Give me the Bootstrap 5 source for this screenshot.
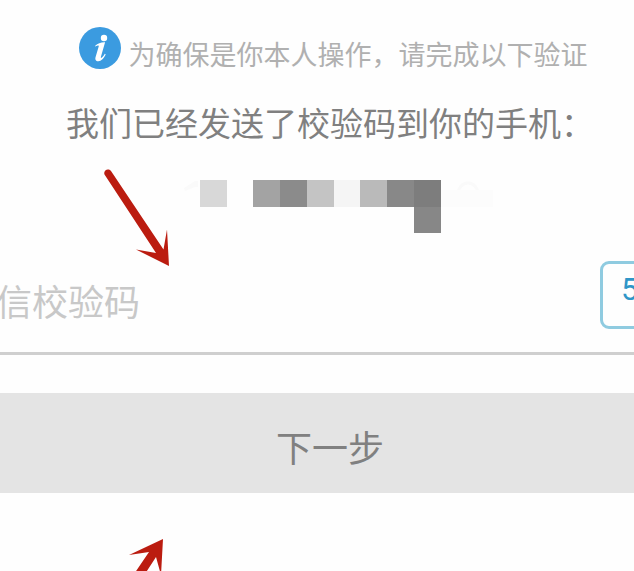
<!DOCTYPE html>
<html lang="zh-CN">
<head>
<meta charset="utf-8">
<meta name="viewport" content="width=device-width, initial-scale=1">
<title>短信验证</title>
<link href="https://cdn.jsdelivr.net/npm/bootstrap@5.3.0/dist/css/bootstrap.min.css" rel="stylesheet">
<style>
body { font-family: Roboto, "Noto Sans CJK SC", sans-serif; background: #fefefe; }
.screen { min-height: 100vh; padding-top: 27px; }
.notice { gap: 8px; padding-left: 32px; font-family: "Noto Sans CJK SC", sans-serif; font-size: 27px; line-height: 54px; color: #b0b0b0; }
.sent { margin-top: 17px; padding-left: 26px; font-family: "Noto Sans CJK SC", sans-serif; font-size: 33px; line-height: 48px; color: #808080; }
.phone { margin-top: 34px; padding-left: 40px; height: 54px; }
.code-row { margin: 27px -80px 0 -4px; height: 94px; border-bottom: 3px solid #cfcfcf; }
.code-input { font-family: "Noto Sans CJK SC", sans-serif; font-size: 36px; line-height: 52px; height: 78px; background: transparent; }
.code-input::placeholder { color: #c8c8c8; opacity: 1; }
.resend { width: 114px; height: 68px; padding: 0 0 10px 18px; border: 3px solid #8fcbe0; border-radius: 9px; color: #2f96c8; font-size: 31px; line-height: 48px; text-align: left; }
.next { margin-top: 38px; height: 100px; background: #e4e4e4; color: #808080; font-family: "Noto Sans CJK SC", sans-serif; font-size: 36px; padding: 6px 0 0 26px; }
.next:hover { background: #dcdcdc; color: #767676; }
.pointers { pointer-events: none; }
</style>
<script src="https://cdn.jsdelivr.net/npm/bootstrap@5.3.0/dist/js/bootstrap.bundle.min.js"></script>
</head>
<body>
<main class="screen position-relative overflow-hidden">
  <div class="notice d-flex justify-content-center align-items-start text-nowrap">
    <svg class="flex-shrink-0" width="42" height="42" viewBox="0 0 42 42" aria-hidden="true">
      <circle cx="21" cy="21" r="21" fill="#3b9be0"/>
      <circle cx="25" cy="11" r="3.200" fill="#fff"/>
      <path d="M16 19C19 16.300 22 15.100 26.100 15.300L22 29.500C21.600 31 22 31.300 22.900 30.500C24 29.700 24.800 28.500 25.800 26.700L26.700 27.200C25 31 22.200 34.200 19.300 34.200C16.600 34.200 15.900 32.200 16.600 29.900L19.700 19.600C20 18.400 19.300 18.100 16.400 19.600Z" fill="#fff"/>
    </svg>
    <span>为确保是你本人操作，请完成以下验证</span>
  </div>
  <p class="sent mb-0 text-center text-nowrap">我们已经发送了校验码到你的手机：</p>
  <div class="phone d-flex justify-content-center">
    <svg width="314" height="54" viewBox="0 0 314 54" role="img" aria-label="已隐藏的手机号">
      <path d="M4 8L15 1h3v6H15L5 11Z" fill="#fafafa"/>
      <path d="M278 14a10 11 0 1 1 20 0" fill="none" stroke="#fafafa" stroke-width="3"/>
      <path fill="#fcfcfc" d="M261 10h52v17h-52z"/>
      <path fill="#d8d8d8" d="M20 0h27v27H20z"/>
      <path fill="#a3a3a3" d="M73 0h27v27H73z"/>
      <path fill="#8b8b8b" d="M100 0h27v27h-27z"/>
      <path fill="#c4c4c4" d="M127 0h27v27h-27z"/>
      <path fill="#f5f5f5" d="M154 0h26v27h-26z"/>
      <path fill="#bababa" d="M180 0h27v27h-27z"/>
      <path fill="#888" d="M207 0h27v27h-27z"/>
      <path fill="#7d7d7d" d="M234 0h27v27h-27z"/>
      <path fill="#878787" d="M234 27h27v26h-27z"/>
    </svg>
  </div>
  <form>
    <div class="code-row d-flex align-items-start">
      <input class="code-input form-control border-0 rounded-0 shadow-none p-0 flex-fill" type="text" inputmode="numeric" placeholder="信校验码" aria-label="短信校验码">
      <button class="resend btn flex-shrink-0" type="button">5</button>
    </div>
    <button class="next btn border-0 rounded-0 w-100 d-block" type="submit">下一步</button>
  </form>
  <svg class="pointers position-absolute top-0 start-0" width="200" height="571" viewBox="0 0 200 571" fill="#bb1c10" aria-hidden="true">
    <path d="M104.500 174.500C103 170.500 108 167.500 111 171L163.500 249.500L167 229.500L169 266L136 249.500L156 253Z"/>
    <path d="M163 539L161 575L156 557L143 577H132L149 552L129 555Z"/>
  </svg>
</main>
</body>
</html>
